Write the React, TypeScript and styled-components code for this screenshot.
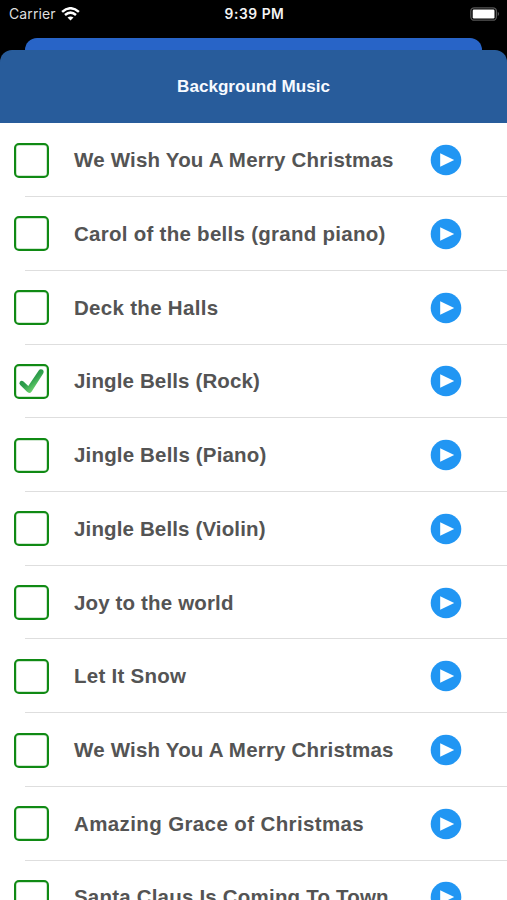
import { useState } from "react";
import styled, { createGlobalStyle } from "styled-components";

const GlobalStyle = createGlobalStyle`
    * {
        box-sizing: border-box;
    }

    body {
        margin: 0;
        background-color: black;
        overflow: hidden;
    }
`;

const Wrapper = styled.div`
    display: flex;
    flex-direction: column;
    width: 507px;
    height: 900px;
    overflow: hidden;
    background-color: black;
    font-family: "Liberation Sans", Arial, sans-serif;
`;

const StatusBar = styled.div`
    display: grid;
    grid-template-columns: 1fr auto 1fr;
    align-items: center;
    flex-shrink: 0;
    height: 38px;
    padding: 0 7px 11px 9px;
    color: #f4f4f4;
    font-family: Inter, sans-serif;
`;

const Carrier = styled.div`
    display: flex;
    align-items: center;
    gap: 5px;
    font-size: 14px;
    letter-spacing: 0.1px;
    color: #dedede;
`;

const Time = styled.div`
    font-size: 13.8px;
    font-weight: 600;
    letter-spacing: 0.55px;
`;

const Battery = styled.svg`
    justify-self: end;
`;

const BackSheet = styled.div`
    flex-shrink: 0;
    height: 24px;
    margin: 0 25px -12px;
    border-radius: 12px 12px 0 0;
    background-color: #2864c7;
`;

const Sheet = styled.div`
    position: relative;
    display: flex;
    flex-direction: column;
    flex: 1;
    min-height: 0;
    border-radius: 12px 12px 0 0;
    background-color: #285c9b;
    overflow: hidden;
`;

const Header = styled.div`
    display: flex;
    justify-content: center;
    align-items: center;
    flex-shrink: 0;
    height: 73.4px;
    padding-top: 1px;
`;

const Title = styled.h1`
    margin: 0;
    font-size: 17.1px;
    font-weight: 700;
    color: #f7faff;
`;

const List = styled.ul`
    margin: 0;
    padding: 0;
    background-color: white;
    list-style: none;
`;

const Row = styled.li`
    display: grid;
    grid-template-columns: 60px 1fr 32px;
    align-items: center;
    height: 73.72px;
    padding: 0 45px 0 14px;
    background: linear-gradient(#dedede, #dedede) 25px 100% / 100% 1px no-repeat;
`;

const CheckBox = styled.button`
    display: flex;
    justify-content: center;
    align-items: center;
    width: 35px;
    height: 35px;
    padding: 0;
    border: 2px solid #108a14;
    border-radius: 5px;
    background-color: white;
    box-shadow: inset 0 0 0 0.5px #108a1466;
`;

const Name = styled.span<{ spacing: number }>`
    font-size: 20.5px;
    font-weight: 700;
    letter-spacing: ${(props) => props.spacing}px;
    color: #545454;
    white-space: nowrap;
`;

const PlayButton = styled.button`
    display: flex;
    width: 32px;
    height: 32px;
    padding: 0;
    border: none;
    background: none;
`;

const songs = [
    { name: "We Wish You A Merry Christmas", spacing: 0.2 },
    { name: "Carol of the bells (grand piano)", spacing: 0.27 },
    { name: "Deck the Halls", spacing: 0.3 },
    { name: "Jingle Bells (Rock)", spacing: 0.14 },
    { name: "Jingle Bells (Piano)", spacing: 0.17 },
    { name: "Jingle Bells (Violin)", spacing: 0.14 },
    { name: "Joy to the world", spacing: 0.15 },
    { name: "Let It Snow", spacing: 0.27 },
    { name: "We Wish You A Merry Christmas", spacing: 0.2 },
    { name: "Amazing Grace of Christmas", spacing: 0.38 },
    { name: "Santa Claus Is Coming To Town", spacing: 0.2 }
];

const WifiIcon = () => (
    <svg width="19" height="14" viewBox="0 0 19 14" fill="none" stroke="white" strokeWidth="2.5">
        <path d="M1.1 4.9Q9.5 -2.4 17.9 4.9" />
        <path d="M4 8Q9.5 3.2 15 8" />
        <path d="M9.5 13.6L6.5 10.6Q9.5 8.2 12.5 10.6Z" fill="white" stroke="none" />
    </svg>
);

const CheckIcon = () => (
    <svg width="31" height="31" viewBox="0 0 31 31" fill="none">
        <defs>
            <linearGradient id="check" gradientUnits="userSpaceOnUse" x1="8" y1="10" x2="19" y2="24">
                <stop offset="0" stopColor="#279447" />
                <stop offset="0.45" stopColor="#2f9f4d" />
                <stop offset="1" stopColor="#70d670" />
            </linearGradient>
        </defs>
        <path d="M3.9 15.7Q5.5 13.9 7.5 15.5L12.3 20L22.7 4.4Q24 2.4 26.3 3.6Q28.5 5 27.2 7.4L15.7 25.4Q13.5 28.2 11 25.8L4.2 19Q2.6 17.4 3.9 15.7Z" fill="url(#check)" />
    </svg>
);

const PlayIcon = () => (
    <svg width="32" height="32" viewBox="0 0 32 32">
        <circle cx="16" cy="16" r="15.3" fill="#2196f3" />
        <path d="M10.2 9.3L24.2 16L10.2 22.7Z" fill="white" />
    </svg>
);

function App() {
    const [selected, setSelected] = useState(3);
    return (
        <Wrapper>
            <GlobalStyle />
            <StatusBar>
                <Carrier>
                    <span>Carrier</span>
                    <WifiIcon />
                </Carrier>
                <Time>9:39 PM</Time>
                <Battery width="30" height="14" viewBox="0 0 30 14">
                    <rect x="0.8" y="0.8" width="25.6" height="12.4" rx="3.5" fill="none" stroke="#555" strokeWidth="1.3" />
                    <rect x="2.7" y="2.5" width="21.8" height="9" rx="1.2" fill="white" />
                    <path d="M27.8 4.8Q30 7 27.8 9.2Z" fill="#666" />
                </Battery>
            </StatusBar>
            <BackSheet />
            <Sheet>
                <Header>
                    <Title>Background Music</Title>
                </Header>
                <List>
                    {songs.map((song, index) =>
                        <Row key={index}>
                            <CheckBox onClick={() => setSelected(index)} aria-label={`Select ${song.name}`}>
                                {index === selected && <CheckIcon />}
                            </CheckBox>
                            <Name spacing={song.spacing}>{song.name}</Name>
                            <PlayButton aria-label={`Play ${song.name}`}>
                                <PlayIcon />
                            </PlayButton>
                        </Row>
                    )}
                </List>
            </Sheet>
        </Wrapper>
    );
};

export default App;
